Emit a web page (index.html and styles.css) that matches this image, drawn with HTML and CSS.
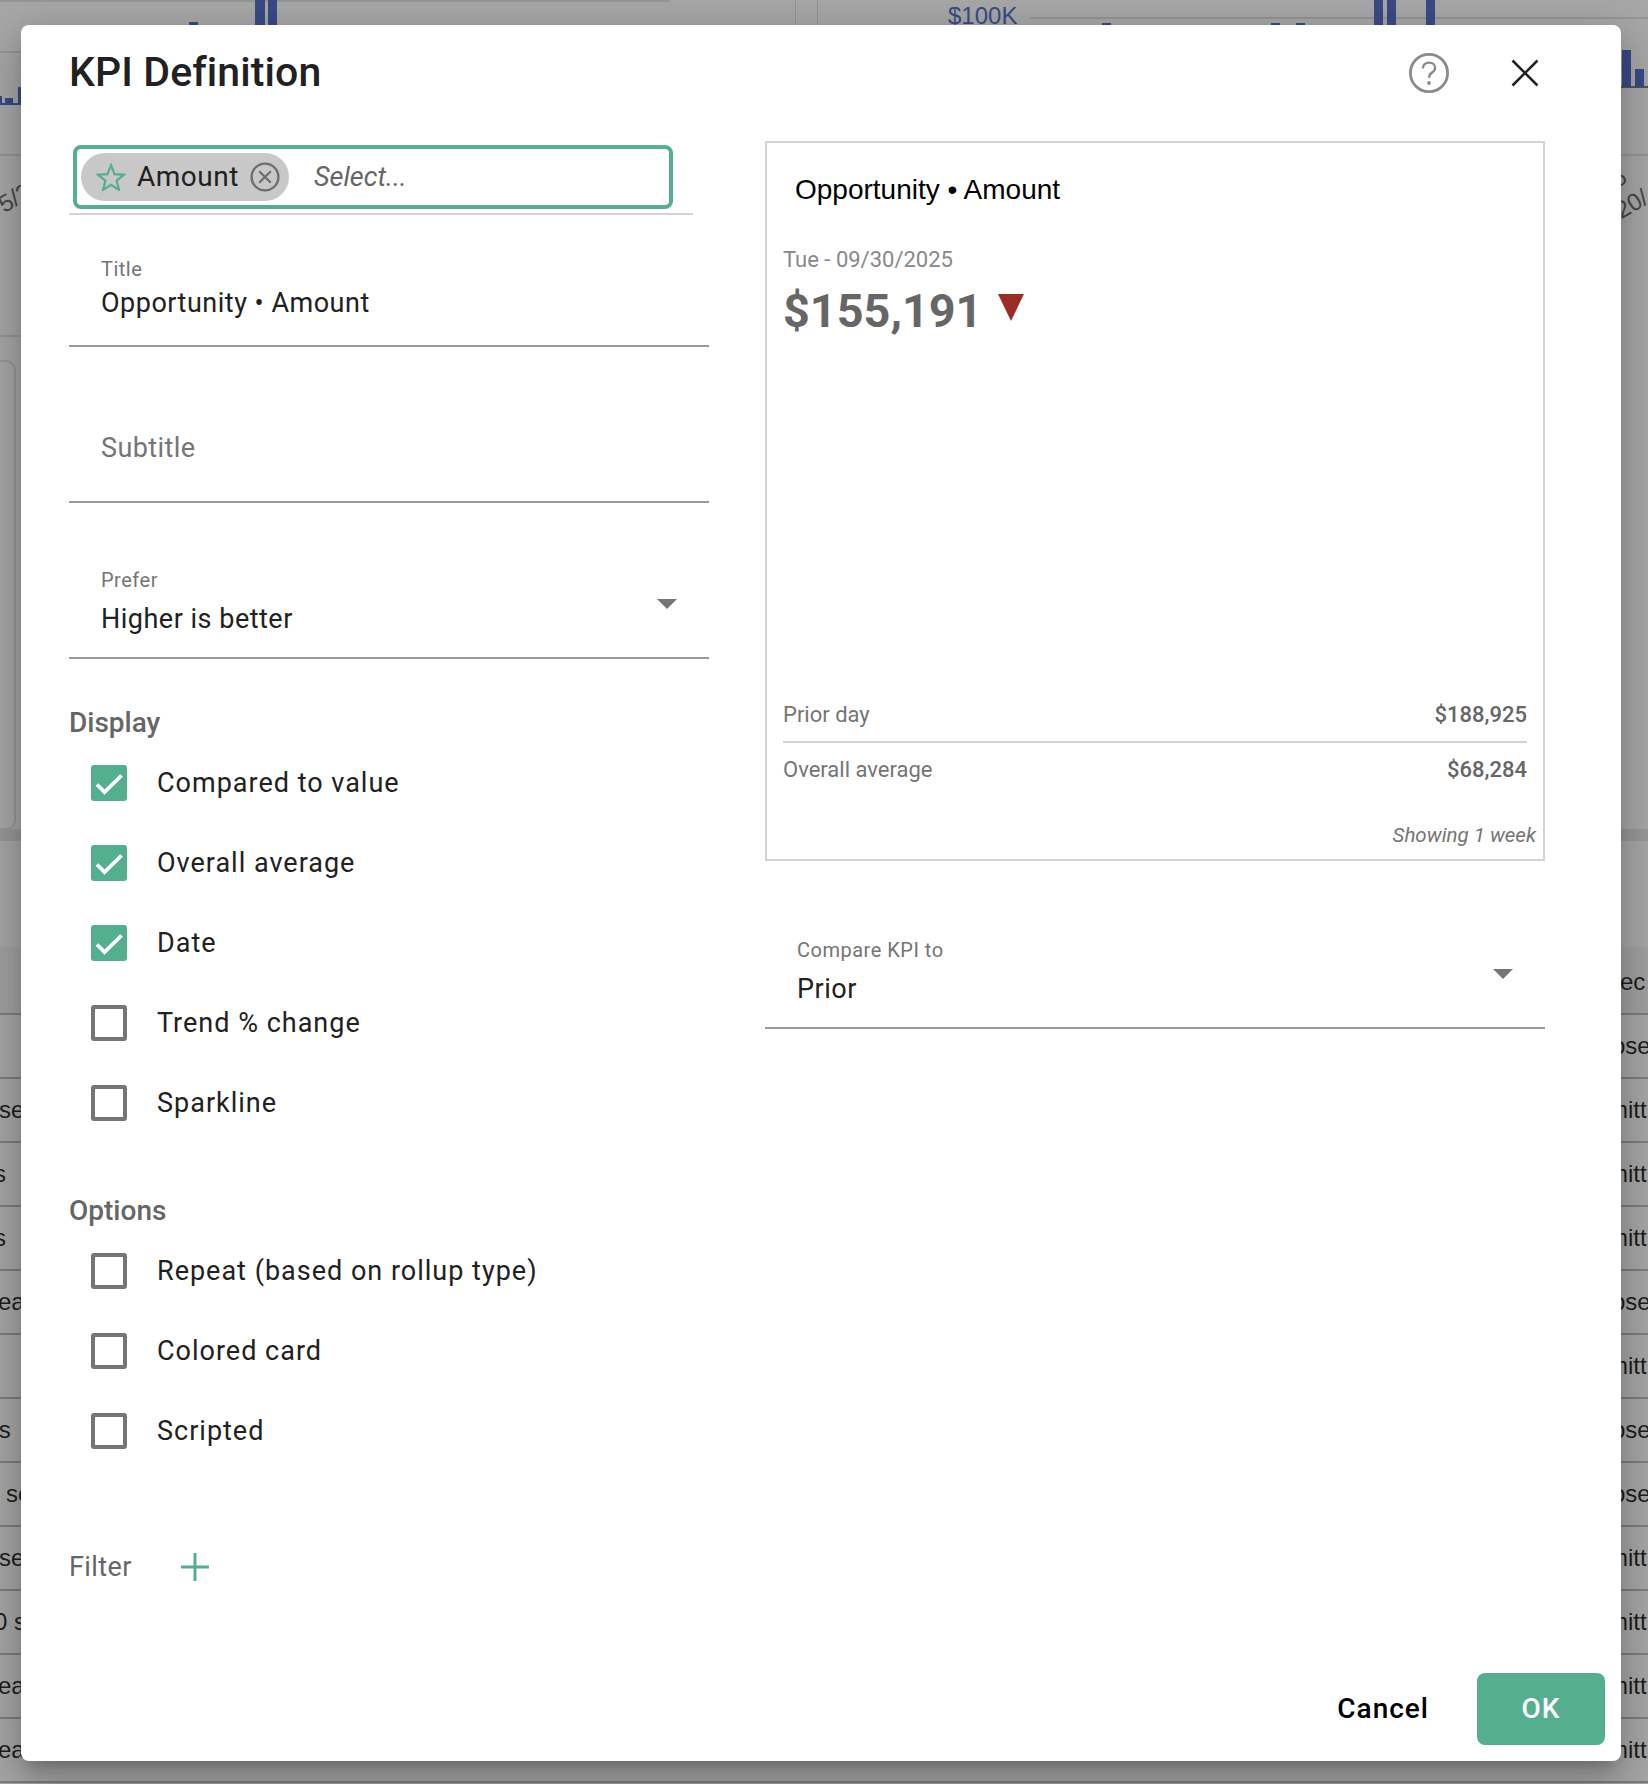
FILE: index.html
```html
<!DOCTYPE html>
<html lang="en">
<head>
<meta charset="utf-8">
<title>KPI Definition</title>
<link rel="stylesheet" href="styles.css">
</head>
<body>
<div class="backdrop">
  <div class="bg-line l1"></div><div class="bg-line l2"></div><div class="bg-line l3"></div><div class="bg-line l4"></div>
  <div class="bg-line l5"></div><div class="bg-line l6"></div><div class="bg-line l7"></div>
  <div class="bg-vline v1"></div><div class="bg-vline v2"></div>
  <div class="bar b1"></div><div class="bar b2"></div><div class="bar b3"></div><div class="bar b4"></div><div class="bar b5"></div><div class="bar b6"></div>
  <div class="bar b7"></div><div class="bar b8"></div><div class="bar b9"></div><div class="bar b10"></div><div class="bar b11"></div>
  <div class="bar b12"></div><div class="bar b13"></div><div class="bar b14"></div><div class="bar b15"></div>
  <div class="axis-tick">$100K</div>
  <div class="rot rot-l">5/2</div>
  <div class="rot rot-r">20/</div>
  <div class="rot rot-o">5</div>
  <div class="bg-card"></div>
  <div class="band"></div>
  <div class="table-head"></div>
  <div class="table">
    <div class="trow tall"><span class="tl"></span><span class="tr ro">rec</span></div>
    <div class="trow"><span class="tl"></span><span class="tr ro">ose</span></div>
    <div class="trow"><span class="tl i1">sea</span><span class="tr rm">mitt</span></div>
    <div class="trow"><span class="tl i2">s</span><span class="tr rm">mitt</span></div>
    <div class="trow"><span class="tl i2">s</span><span class="tr rm">mitt</span></div>
    <div class="trow"><span class="tl i3">eat</span><span class="tr ro">ose</span></div>
    <div class="trow"><span class="tl"></span><span class="tr rm">mitt</span></div>
    <div class="trow"><span class="tl i4">ts</span><span class="tr ro">ose</span></div>
    <div class="trow"><span class="tl i5">sea</span><span class="tr ro">ose</span></div>
    <div class="trow"><span class="tl i1">sea</span><span class="tr rm">mitt</span></div>
    <div class="trow"><span class="tl i6">0 sea</span><span class="tr rm">mitt</span></div>
    <div class="trow"><span class="tl i3">eat</span><span class="tr rm">mitt</span></div>
    <div class="trow"><span class="tl i3">eat</span><span class="tr rm">mitt</span></div>
  </div>
</div>

<div class="dialog">
  <header class="dialog-head">
    <h1 class="dialog-title">KPI Definition</h1>
    <div class="head-actions">
      <svg class="icon-help" viewBox="0 0 40 40" width="40" height="40" aria-hidden="true">
        <circle cx="20" cy="20" r="18.6" fill="none" stroke="#8a8a8a" stroke-width="2.8"/>
        <path d="M13.8 15.4c.2-3.6 2.8-5.8 6.3-5.8 3.6 0 6 2.2 6 5.2 0 2.2-1.1 3.5-3 4.8-2 1.4-3 2.6-3 5.2" fill="none" stroke="#8a8a8a" stroke-width="2.4"/>
        <circle cx="20" cy="30" r="1.9" fill="#8a8a8a"/>
      </svg>
      <svg class="icon-close" viewBox="0 0 28 28" width="28" height="28" aria-hidden="true">
        <path d="M1.5 1.5l25 25M26.5 1.5l-25 25" fill="none" stroke="#212121" stroke-width="2.6"/>
      </svg>
    </div>
  </header>

  <div class="dialog-body">
    <section class="col-left">
      <div class="select-wrap">
        <div class="select-box">
          <span class="chip">
            <svg class="icon-star" viewBox="0 0 30 28" width="30" height="28" aria-hidden="true">
              <path d="M15 2.2l3.5 8.9 9.4.6-7.3 6 2.4 9.2L15 21.8 7 26.9l2.4-9.2-7.3-6 9.4-.6z" fill="none" stroke="#55af8f" stroke-width="2.2"/>
            </svg>
            <span class="chip-text">Amount</span>
            <svg class="icon-remove" viewBox="0 0 30 30" width="30" height="30" aria-hidden="true">
              <circle cx="15" cy="15" r="13.4" fill="none" stroke="#6e6e6e" stroke-width="2.4"/>
              <path d="M9.2 9.2l11.6 11.6M20.8 9.2L9.2 20.8" fill="none" stroke="#6e6e6e" stroke-width="2.2"/>
            </svg>
          </span>
          <span class="select-placeholder">Select...</span>
        </div>
      </div>

      <div class="field field-title">
        <span class="field-label">Title</span>
        <span class="field-value">Opportunity • Amount</span>
      </div>
      <div class="field field-subtitle">
        <span class="field-placeholder">Subtitle</span>
      </div>
      <div class="field field-select field-prefer">
        <span class="field-label">Prefer</span>
        <span class="field-value">Higher is better</span>
        <span class="caret"></span>
      </div>

      <h2 class="group-title group-display">Display</h2>
      <div class="check-row"><span class="check on"><svg viewBox="0 0 36 36" width="36" height="36" aria-hidden="true"><path d="M6 19.5l7.5 7.5 17-16.5" fill="none" stroke="#fff" stroke-width="3.8"/></svg></span><span class="check-label">Compared to value</span></div>
      <div class="check-row"><span class="check on"><svg viewBox="0 0 36 36" width="36" height="36" aria-hidden="true"><path d="M6 19.5l7.5 7.5 17-16.5" fill="none" stroke="#fff" stroke-width="3.8"/></svg></span><span class="check-label">Overall average</span></div>
      <div class="check-row"><span class="check on"><svg viewBox="0 0 36 36" width="36" height="36" aria-hidden="true"><path d="M6 19.5l7.5 7.5 17-16.5" fill="none" stroke="#fff" stroke-width="3.8"/></svg></span><span class="check-label">Date</span></div>
      <div class="check-row"><span class="check"></span><span class="check-label">Trend % change</span></div>
      <div class="check-row"><span class="check"></span><span class="check-label">Sparkline</span></div>

      <h2 class="group-title group-options">Options</h2>
      <div class="check-row"><span class="check"></span><span class="check-label">Repeat (based on rollup type)</span></div>
      <div class="check-row"><span class="check"></span><span class="check-label">Colored card</span></div>
      <div class="check-row"><span class="check"></span><span class="check-label">Scripted</span></div>

      <div class="filter-row">
        <span class="filter-label">Filter</span>
        <svg class="icon-plus" viewBox="0 0 28 28" width="28" height="28" aria-hidden="true">
          <path d="M14 0v28M0 14h28" fill="none" stroke="#55af8f" stroke-width="3"/>
        </svg>
      </div>
    </section>

    <section class="col-right">
      <div class="kpi-card">
        <div class="kpi-title">Opportunity • Amount</div>
        <div class="kpi-date">Tue - 09/30/2025</div>
        <div class="kpi-value-row">
          <span class="kpi-value">$155,191</span>
          <span class="kpi-down"></span>
        </div>
        <div class="kpi-spacer"></div>
        <div class="kpi-stat stat-first"><span>Prior day</span><span class="stat-num">$188,925</span></div>
        <div class="kpi-stat stat-second"><span>Overall average</span><span class="stat-num">$68,284</span></div>
        <div class="kpi-showing">Showing 1 week</div>
      </div>
      <div class="field field-select field-compare">
        <span class="field-label">Compare KPI to</span>
        <span class="field-value">Prior</span>
        <span class="caret"></span>
      </div>
    </section>
  </div>

  <footer class="dialog-foot">
    <button class="btn-text" type="button">Cancel</button>
    <button class="btn-ok" type="button">OK</button>
  </footer>
</div>
</body>
</html>
```

FILE: styles.css
```css
* { box-sizing: border-box; }
html, body { margin: 0; padding: 0; }
body {
  width: 1648px;
  height: 1784px;
  position: relative;
  overflow: hidden;
  font-family: Roboto, "Liberation Sans", sans-serif;
  background: #a7a7a7;
  color: #212121;
}

/* dimmed page behind the dialog */
.backdrop { position: absolute; inset: 0; overflow: hidden; }
.bg-line { position: absolute; height: 2px; background: #959595; }
.l1 { left: 0; top: 0; width: 670px; }
.l2 { left: 0; top: 51px; width: 21px; }
.l3 { left: 0; top: 154px; width: 21px; }
.l4 { left: 0; top: 335px; width: 21px; }
.l5 { left: 1030px; top: 17px; width: 618px; }
.l6 { left: 1621px; top: 154px; width: 27px; }
.l7 { left: 1621px; top: 86px; width: 27px; height: 2px; background: #555; }
.bg-vline { position: absolute; top: 0; width: 1px; height: 26px; background: #959595; }
.v1 { left: 795px; }
.v2 { left: 817px; }
.bar { position: absolute; background: #3a4a85; }
.b1 { left: 255px; top: 0; width: 10px; height: 26px; }
.b2 { left: 268px; top: 0; width: 9px; height: 26px; }
.b3 { left: 189px; top: 22px; width: 9px; height: 4px; }
.b4 { left: 1374px; top: 0; width: 9px; height: 26px; }
.b5 { left: 1387px; top: 0; width: 9px; height: 26px; }
.b6 { left: 1426px; top: 0; width: 9px; height: 26px; }
.b7 { left: 1102px; top: 23px; width: 9px; height: 3px; }
.b8 { left: 1271px; top: 23px; width: 9px; height: 3px; }
.b9 { left: 1296px; top: 23px; width: 9px; height: 3px; }
.b10 { left: 0; top: 96px; width: 2px; height: 8px; }
.b11 { left: 5px; top: 98px; width: 8px; height: 6px; }
.b12 { left: 18px; top: 87px; width: 3px; height: 17px; }
.b13 { left: 1622px; top: 50px; width: 9px; height: 37px; }
.b14 { left: 1635px; top: 69px; width: 9px; height: 18px; }
.b15 { left: 0; top: 103px; width: 21px; height: 2px; }
.axis-tick {
  position: absolute; left: 948px; top: 2px;
  font: 24px/28px "Liberation Sans", sans-serif;
  color: #3a4a85;
}
.rot {
  position: absolute;
  font: 24px/28px "Liberation Sans", sans-serif;
  color: #484848;
}
.rot-l { left: -2px; top: 184px; transform: rotate(-30deg); }
.rot-r { left: 1615px; top: 190px; transform: rotate(-30deg); }
.rot-o { left: 1612px; top: 164px; transform: rotate(-30deg); }
.bg-card {
  position: absolute; left: -20px; top: 360px; width: 36px; height: 470px;
  border: 2px solid #969696; border-radius: 10px;
}
.band { position: absolute; left: 0; right: 0; top: 829px; height: 12px; background: #989898; }
.table-head { position: absolute; left: 0; right: 0; top: 947px; height: 66px; background: #a1a1a1; }
.table { position: absolute; left: 0; right: 0; top: 951px; }
.trow {
  height: 64px;
  border-bottom: 2px solid #7e7e7e;
  display: flex;
  justify-content: space-between;
  align-items: center;
  font: 24px/30px "Liberation Sans", sans-serif;
  color: #1e1e1e;
  white-space: pre;
  position: relative;
}
.tl { width: 60px; }
.tr { position: absolute; top: 16px; }
.rm { left: 1608px; }
.ro { left: 1612px; }
.i1 { margin-left: -1px; }
.i2 { margin-left: -6px; }
.i3 { margin-left: -2px; }
.i4 { margin-left: -8px; }
.i5 { margin-left: 6px; }
.i6 { margin-left: -6px; }

/* dialog */
.dialog {
  position: absolute;
  left: 21px;
  top: 25px;
  width: 1600px;
  height: 1736px;
  background: #fff;
  border-radius: 8px;
  display: flex;
  flex-direction: column;
  box-shadow: 0 11px 15px -7px rgba(0,0,0,.2), 0 24px 38px 3px rgba(0,0,0,.14), 0 9px 46px 8px rgba(0,0,0,.12);
}
.dialog-head {
  height: 116px;
  flex: none;
  padding: 26px 82px 0 48px;
  display: flex;
  justify-content: space-between;
  align-items: flex-start;
}
.dialog-title {
  margin: -1px 0 0;
  font-size: 41px;
  line-height: 44px;
  font-weight: 500;
  letter-spacing: .1px;
  color: #212121;
}
.head-actions { display: flex; align-items: center; gap: 62px; padding-top: 2px; }
.icon-help, .icon-close { display: block; }
.dialog-body {
  flex: 1;
  display: flex;
  padding-left: 48px;
  gap: 56px;
  min-height: 0;
}
.col-left { width: 640px; flex: none; }
.col-right { width: 780px; flex: none; }

.select-wrap {
  width: 624px;
  height: 74px;
  padding: 4px 0 0 4px;
  border-bottom: 2px solid #d4d4d4;
}
.select-box {
  width: 600px;
  height: 64px;
  border: 4px solid #55af8f;
  border-radius: 8px;
  display: flex;
  align-items: center;
  padding-left: 4px;
}
.chip {
  width: 208px;
  height: 48px;
  background: #c8c8c8;
  border-radius: 24px;
  display: flex;
  align-items: center;
  padding-left: 15px;
}
.chip-text {
  font-size: 28px;
  line-height: 36px;
  letter-spacing: .5px;
  margin-left: 11px;
  color: #212121;
}
.icon-remove { margin-left: 11px; }
.select-placeholder {
  margin-left: 25px;
  font-size: 27px;
  font-style: italic;
  color: #666;
}

.field {
  position: relative;
  display: flex;
  flex-direction: column;
  border-bottom: 2px solid #999;
}
.field-label { font-size: 20px; line-height: 24px; color: #757575; letter-spacing: .5px; padding-left: 32px; }
.field-value { font-size: 27px; line-height: 32px; color: #212121; letter-spacing: .5px; padding-left: 32px; }
.field-placeholder { font-size: 27px; line-height: 32px; color: #757575; letter-spacing: .4px; padding-left: 32px; }
.field-title { height: 132px; justify-content: flex-end; padding-bottom: 26px; }
.field-title .field-label { margin-bottom: 6px; }
.field-subtitle { height: 156px; justify-content: flex-end; padding-bottom: 37px; }
.field-prefer { height: 156px; justify-content: flex-end; padding-bottom: 22px; }
.field-prefer .field-label { margin-bottom: 11px; }
.field-compare { height: 168px; justify-content: flex-end; padding-bottom: 22px; }
.field-compare .field-label { margin-bottom: 11px; }
.caret {
  position: absolute;
  right: 32px;
  width: 0;
  height: 0;
  border-left: 10px solid transparent;
  border-right: 10px solid transparent;
  border-top: 10px solid #757575;
}
.field-prefer .caret { top: 96px; }
.field-compare .caret { top: 108px; }

.group-title { margin: 0; font-size: 28px; line-height: 32px; font-weight: 500; color: #666; }
.group-display { margin-top: 48px; margin-bottom: 4px; }
.group-options { margin-top: 52px; margin-bottom: 4px; }
.check-row { height: 80px; display: flex; align-items: center; padding-left: 22px; }
.check {
  width: 36px;
  height: 36px;
  flex: none;
  border: 4px solid #757575;
  border-radius: 3px;
  background: #fff;
}
.check.on { border: 0; background: #55af8f; }
.check.on svg { display: block; }
.check-label { margin-left: 30px; font-size: 27px; letter-spacing: 1px; line-height: 32px; color: #212121; }

.filter-row { margin-top: 80px; display: flex; align-items: center; height: 32px; }
.filter-label { font-size: 27px; line-height: 32px; color: #666; letter-spacing: .4px; width: 112px; }
.icon-plus { display: block; }

.kpi-card {
  width: 780px;
  height: 720px;
  border: 2px solid #d4d4d4;
  display: flex;
  flex-direction: column;
}
.kpi-title {
  margin: 31px 0 0 28px;
  font: 28px/32px "Liberation Sans", Arial, sans-serif;
  color: #000;
}
.kpi-date { margin: 40px 0 0 16px; font-size: 22px; line-height: 28px; color: #888; }
.kpi-value-row { margin: 11px 0 0 16px; display: flex; align-items: flex-start; gap: 16px; height: 52px; }
.kpi-value { font-size: 46.8px; line-height: 52px; font-weight: 700; color: #666; }
.kpi-down {
  margin-top: 9px;
  width: 0;
  height: 0;
  border-left: 13px solid transparent;
  border-right: 13px solid transparent;
  border-top: 27px solid #9b2c26;
}
.kpi-spacer { flex: 1; }
.kpi-stat {
  margin: 0 16px;
  display: flex;
  justify-content: space-between;
  font-size: 22px;
  line-height: 28px;
  color: #757575;
}
.stat-num { font-weight: 500; color: #666; }
.stat-first { height: 50px; padding-top: 8px; border-bottom: 2px solid #d4d4d4; }
.stat-second { height: 50px; padding-top: 13px; }
.kpi-showing {
  margin: 30px 7px 12px 0;
  text-align: right;
  font-size: 20.5px;
  line-height: 24px;
  font-style: italic;
  color: #757575;
}

.dialog-foot {
  flex: none;
  display: flex;
  justify-content: flex-end;
  align-items: center;
  padding: 0 16px 16px 0;
}
.btn-text {
  border: 0;
  background: none;
  padding: 0;
  margin-right: 48px;
  font: 500 28px/32px Roboto, sans-serif;
  letter-spacing: 1px;
  color: #000;
}
.btn-ok {
  width: 128px;
  height: 72px;
  border: 0;
  border-radius: 8px;
  background: #55af8f;
  font: 500 28px/32px Roboto, sans-serif;
  letter-spacing: 1px;
  color: #fff;
}
```
